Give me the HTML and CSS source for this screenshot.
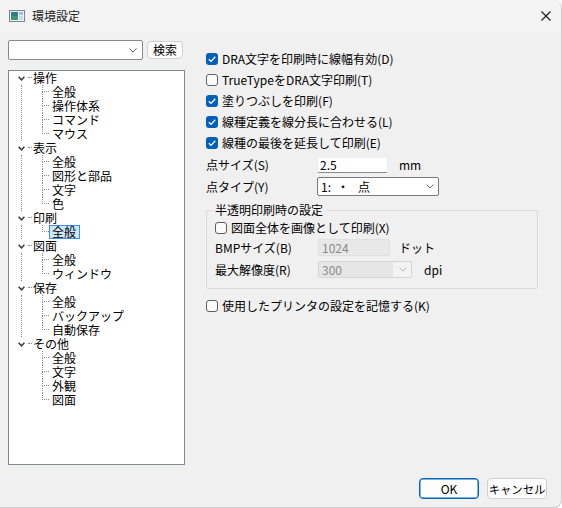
FILE: index.html
```html
<!DOCTYPE html>
<html lang="ja">
<head>
<meta charset="utf-8">
<title>環境設定</title>
<link rel="stylesheet" href="styles.css">
</head>
<body>
<div class="window">
  <header class="titlebar">
    <svg class="app-icon" width="16" height="12" viewBox="0 0 16 12">
      <rect x="0.5" y="0.5" width="15" height="11" fill="#eef1f4" stroke="#7d8590"/>
      <rect x="2" y="2" width="7" height="8" fill="#2f7f86"/>
      <rect x="2" y="6" width="7" height="4" fill="#3e9a6e"/>
      <rect x="10" y="2" width="4" height="3" fill="#9cc3e6"/>
      <rect x="10" y="6" width="4" height="4" fill="#c9dcee"/>
    </svg>
    <span class="title">環境設定</span>
    <svg class="close" width="10" height="10" viewBox="0 0 10 10">
      <path d="M0.5 0.5 L9.5 9.5 M9.5 0.5 L0.5 9.5" stroke="#1b1b1b" stroke-width="1.1" fill="none"/>
    </svg>
  </header>

  <div class="main">
    <div class="left">
      <div class="search">
        <div class="combo">
          <svg class="chev" width="8" height="5" viewBox="0 0 8 5"><path d="M0.5 0.5 L4 4 L7.5 0.5" stroke="#5a5a5a" fill="none"/></svg>
        </div>
        <button class="btn search-btn">検索</button>
      </div>
      <div class="tree">
        <ul class="tree-root">
          <li class="node">
            <div class="prow"><svg class="exp" width="7" height="5" viewBox="0 0 7 5"><path d="M0.6 0.8 L3.5 3.8 L6.4 0.8" stroke="#3c3c3c" stroke-width="1.5" fill="none"/></svg><span class="hl"></span><span class="lbl">操作</span></div>
            <ul class="kids">
              <li class="crow"><span class="conn"><i class="t"></i><i class="b"></i></span><span class="lbl">全般</span></li>
              <li class="crow"><span class="conn"><i class="t"></i><i class="b"></i></span><span class="lbl">操作体系</span></li>
              <li class="crow"><span class="conn"><i class="t"></i><i class="b"></i></span><span class="lbl">コマンド</span></li>
              <li class="crow last"><span class="conn"><i class="t"></i><i class="b"></i></span><span class="lbl">マウス</span></li>
            </ul>
          </li>
          <li class="node">
            <div class="prow"><svg class="exp" width="7" height="5" viewBox="0 0 7 5"><path d="M0.6 0.8 L3.5 3.8 L6.4 0.8" stroke="#3c3c3c" stroke-width="1.5" fill="none"/></svg><span class="hl"></span><span class="lbl">表示</span></div>
            <ul class="kids">
              <li class="crow"><span class="conn"><i class="t"></i><i class="b"></i></span><span class="lbl">全般</span></li>
              <li class="crow"><span class="conn"><i class="t"></i><i class="b"></i></span><span class="lbl">図形と部品</span></li>
              <li class="crow"><span class="conn"><i class="t"></i><i class="b"></i></span><span class="lbl">文字</span></li>
              <li class="crow last"><span class="conn"><i class="t"></i><i class="b"></i></span><span class="lbl">色</span></li>
            </ul>
          </li>
          <li class="node">
            <div class="prow"><svg class="exp" width="7" height="5" viewBox="0 0 7 5"><path d="M0.6 0.8 L3.5 3.8 L6.4 0.8" stroke="#3c3c3c" stroke-width="1.5" fill="none"/></svg><span class="hl"></span><span class="lbl">印刷</span></div>
            <ul class="kids">
              <li class="crow last"><span class="conn"><i class="t"></i><i class="b"></i></span><span class="lbl selected">全般</span></li>
            </ul>
          </li>
          <li class="node">
            <div class="prow"><svg class="exp" width="7" height="5" viewBox="0 0 7 5"><path d="M0.6 0.8 L3.5 3.8 L6.4 0.8" stroke="#3c3c3c" stroke-width="1.5" fill="none"/></svg><span class="hl"></span><span class="lbl">図面</span></div>
            <ul class="kids">
              <li class="crow"><span class="conn"><i class="t"></i><i class="b"></i></span><span class="lbl">全般</span></li>
              <li class="crow last"><span class="conn"><i class="t"></i><i class="b"></i></span><span class="lbl">ウィンドウ</span></li>
            </ul>
          </li>
          <li class="node">
            <div class="prow"><svg class="exp" width="7" height="5" viewBox="0 0 7 5"><path d="M0.6 0.8 L3.5 3.8 L6.4 0.8" stroke="#3c3c3c" stroke-width="1.5" fill="none"/></svg><span class="hl"></span><span class="lbl">保存</span></div>
            <ul class="kids">
              <li class="crow"><span class="conn"><i class="t"></i><i class="b"></i></span><span class="lbl">全般</span></li>
              <li class="crow"><span class="conn"><i class="t"></i><i class="b"></i></span><span class="lbl">バックアップ</span></li>
              <li class="crow last"><span class="conn"><i class="t"></i><i class="b"></i></span><span class="lbl">自動保存</span></li>
            </ul>
          </li>
          <li class="node lastnode">
            <div class="prow"><svg class="exp" width="7" height="5" viewBox="0 0 7 5"><path d="M0.6 0.8 L3.5 3.8 L6.4 0.8" stroke="#3c3c3c" stroke-width="1.5" fill="none"/></svg><span class="hl"></span><span class="lbl">その他</span></div>
            <ul class="kids">
              <li class="crow"><span class="conn"><i class="t"></i><i class="b"></i></span><span class="lbl">全般</span></li>
              <li class="crow"><span class="conn"><i class="t"></i><i class="b"></i></span><span class="lbl">文字</span></li>
              <li class="crow"><span class="conn"><i class="t"></i><i class="b"></i></span><span class="lbl">外観</span></li>
              <li class="crow last"><span class="conn"><i class="t"></i><i class="b"></i></span><span class="lbl">図面</span></li>
            </ul>
          </li>
        </ul>
      </div>
    </div>

    <div class="right">
      <div class="check-row"><span class="cb on"><svg width="12" height="12" viewBox="0 0 12 12"><path d="M2.8 6.2 L5 8.4 L9.3 3.8" stroke="#fff" stroke-width="1.3" fill="none"/></svg></span><span>DRA文字を印刷時に線幅有効(D)</span></div>
      <div class="check-row"><span class="cb"></span><span>TrueTypeをDRA文字印刷(T)</span></div>
      <div class="check-row"><span class="cb on"><svg width="12" height="12" viewBox="0 0 12 12"><path d="M2.8 6.2 L5 8.4 L9.3 3.8" stroke="#fff" stroke-width="1.3" fill="none"/></svg></span><span>塗りつぶしを印刷(F)</span></div>
      <div class="check-row"><span class="cb on"><svg width="12" height="12" viewBox="0 0 12 12"><path d="M2.8 6.2 L5 8.4 L9.3 3.8" stroke="#fff" stroke-width="1.3" fill="none"/></svg></span><span>線種定義を線分長に合わせる(L)</span></div>
      <div class="check-row"><span class="cb on"><svg width="12" height="12" viewBox="0 0 12 12"><path d="M2.8 6.2 L5 8.4 L9.3 3.8" stroke="#fff" stroke-width="1.3" fill="none"/></svg></span><span>線種の最後を延長して印刷(E)</span></div>

      <div class="field-row size-row">
        <span class="field-label">点サイズ(S)</span>
        <div class="edit">2.5</div>
        <span class="unit mm">mm</span>
      </div>
      <div class="field-row type-row">
        <span class="field-label">点タイプ(Y)</span>
        <div class="select">
          <span>1:</span><span class="pt-dot">・</span><span class="pt-name">点</span>
          <svg class="sel-chev" width="8" height="5" viewBox="0 0 8 5"><path d="M0.5 0.5 L4 4 L7.5 0.5" stroke="#6b6b6b" fill="none"/></svg>
        </div>
      </div>

      <fieldset class="group">
        <legend>半透明印刷時の設定</legend>
        <div class="check-row inner-check"><span class="cb"></span><span>図面全体を画像として印刷(X)</span></div>
        <div class="field-row inner bmp-row">
          <span class="field-label in">BMPサイズ(B)</span>
          <div class="edit disabled">1024</div>
          <span class="unit dots">ドット</span>
        </div>
        <div class="field-row inner dpi-row">
          <span class="field-label in">最大解像度(R)</span>
          <div class="select disabled">
            <span class="dis-text">300</span>
            <svg class="sel-chev" width="8" height="5" viewBox="0 0 8 5"><path d="M0.5 0.5 L4 4 L7.5 0.5" stroke="#b4b4b4" fill="none"/></svg>
          </div>
          <span class="unit dpi">dpi</span>
        </div>
      </fieldset>

      <div class="check-row last-check"><span class="cb"></span><span>使用したプリンタの設定を記憶する(K)</span></div>
    </div>
  </div>

  <footer class="footer">
    <button class="btn primary">OK</button>
    <button class="btn cancel">キャンセル</button>
  </footer>
</div>
</body>
</html>
```

FILE: styles.css
```css
html, body {
  margin: 0;
  padding: 0;
  background: #ffffff;
}

body {
  font-family: "Noto Sans CJK JP", "Noto Sans", sans-serif;
  font-size: 12px;
  color: #000;
}

.window {
  width: 562px;
  height: 508px;
  box-sizing: border-box;
  background: #f0f0f0;
  border-right: 1px solid #cdcdcd;
  border-bottom: 1px solid #cdcdcd;
  border-top-right-radius: 8px;
  border-bottom-right-radius: 8px;
  display: flex;
  flex-direction: column;
  overflow: hidden;
}

/* title bar */
.titlebar {
  flex: none;
  height: 32px;
  background: #f3f3f3;
  display: flex;
  align-items: center;
  padding-left: 9px;
}

.app-icon {
  display: block;
}

.title {
  margin-left: 7px;
  font-size: 12px;
  line-height: 14px;
  color: #1a1a1a;
}

.close {
  display: block;
  margin-left: auto;
  margin-right: 10px;
}

/* main area */
.main {
  flex: none;
  display: grid;
  grid-template-columns: 177px 332px;
  column-gap: 21px;
  padding: 8px 0 0 8px;
}

.left {
  display: flex;
  flex-direction: column;
}

.search {
  display: flex;
  align-items: center;
  gap: 4px;
  height: 20px;
}

.combo {
  width: 135px;
  height: 20px;
  box-sizing: border-box;
  background: #fff;
  border: 1px solid #8a8a8a;
  border-radius: 2px;
  display: flex;
  align-items: center;
  justify-content: flex-end;
  padding-right: 5px;
}

.chev {
  display: block;
}

.btn {
  font-family: "Noto Sans CJK JP", "Noto Sans", sans-serif;
  font-size: 12px;
  line-height: 14px;
  color: #000;
  background: #fdfdfd;
  border: 1px solid #d0d0d0;
  border-radius: 4px;
  padding: 0;
  box-sizing: border-box;
  white-space: nowrap;
}

.search-btn {
  width: 36px;
  height: 18px;
}

/* tree */
.tree {
  margin-top: 10px;
  height: 395px;
  box-sizing: border-box;
  background: #fff;
  border: 1px solid #828790;
}

.tree ul {
  list-style: none;
  margin: 0;
  padding: 0;
}

.prow {
  height: 14px;
  display: flex;
  align-items: center;
  padding-left: 9px;
}

.exp {
  display: block;
  width: 7px;
  height: 5px;
  margin-top: 1px;
}

.hl {
  align-self: flex-start;
  width: 4px;
  height: 7px;
  box-sizing: border-box;
  margin-left: 3px;
  border-bottom: 1px dotted #8c8c8c;
}

.lbl {
  line-height: 12px;
  border: 1px solid transparent;
  padding: 0 3px 0 2px;
  white-space: nowrap;
}

.prow .lbl {
  padding-left: 0;
}

.lbl.selected {
  background: #cce8ff;
  border-color: #3b8fdc;
}

.tree .kids {
  margin-left: 12px;
  border-left: 1px dotted #8c8c8c;
}

.tree .lastnode .kids {
  border-left-color: transparent;
}

.crow {
  height: 14px;
  display: flex;
  align-items: center;
  padding-left: 20px;
}

.conn {
  align-self: stretch;
  width: 7px;
  display: flex;
  flex-direction: column;
}

.conn i {
  display: block;
  height: 7px;
  box-sizing: border-box;
  border-left: 1px dotted #8c8c8c;
}

.conn .t {
  border-bottom: 1px dotted #8c8c8c;
}

.crow.last .conn .b {
  border-left-color: transparent;
}

/* right panel */
.right {
  display: flex;
  flex-direction: column;
  padding-top: 8px;
}

.check-row {
  height: 21px;
  display: flex;
  align-items: center;
  line-height: 14px;
  white-space: nowrap;
}

.cb {
  flex: none;
  width: 12px;
  height: 12px;
  box-sizing: border-box;
  border: 1px solid #5f5f5f;
  border-radius: 3px;
  background: #fafafa;
  margin-right: 4px;
  display: flex;
  align-items: center;
  justify-content: center;
}

.cb.on {
  border: none;
  background: #005fb8;
}

.cb svg {
  display: block;
}

.field-row {
  display: flex;
  align-items: center;
  line-height: 14px;
  white-space: nowrap;
}

.size-row {
  margin-top: 4px;
  height: 16px;
}

.type-row {
  margin-top: 4px;
  height: 19px;
}

.field-label {
  width: 111px;
  flex: none;
}

.field-label.in {
  width: 103px;
}

.edit {
  width: 71px;
  height: 16px;
  box-sizing: border-box;
  background: #fff;
  border: 1px solid #ececec;
  border-bottom-color: #8a8a8a;
  border-radius: 2px;
  padding-left: 2px;
  display: flex;
  align-items: center;
}

.unit.mm {
  margin-left: 11px;
}

.select {
  width: 122px;
  height: 19px;
  box-sizing: border-box;
  background: #fff;
  border: 1px solid #7a7a7a;
  border-radius: 2px;
  display: flex;
  align-items: center;
  padding-left: 3px;
  padding-right: 4px;
}

.pt-dot {
  margin-left: 6px;
}

.pt-name {
  margin-left: 9px;
}

.sel-chev {
  display: block;
  margin-left: auto;
}

/* group box */
.group {
  margin: 6px 0 0 0;
  padding: 0 0 10px 8px;
  border: 1px solid #dcdcdc;
  border-radius: 2px;
  min-width: 0;
  box-sizing: border-box;
  width: 332px;
}

.group legend {
  padding: 0 2px;
  margin-left: -2px;
  line-height: 16px;
  color: #000;
}

.inner-check {
  height: 20px;
}

.bmp-row {
  margin-top: 1px;
  height: 17px;
}

.dpi-row {
  margin-top: 5px;
  height: 17px;
}

.edit.disabled {
  width: 72px;
  height: 17px;
  background: #e8e8e8;
  border: 1px solid #e0e0e0;
  color: #8a8a8a;
  padding-left: 3px;
}

.unit.dots {
  margin-left: 9px;
}

.select.disabled {
  width: 94px;
  height: 17px;
  background: #f3f3f3;
  border: 1px solid #d4d4d4;
  padding-left: 0;
  padding-right: 4px;
}

.dis-text {
  align-self: stretch;
  width: 74px;
  background: #e6e6e6;
  color: #8a8a8a;
  padding-left: 3px;
  display: flex;
  align-items: center;
  box-sizing: border-box;
}

.unit.dpi {
  margin-left: 12px;
}

.last-check {
  margin-top: 6px;
}

/* footer */
.footer {
  flex: none;
  display: flex;
  justify-content: flex-end;
  gap: 8px;
  padding: 13px 14px 0 0;
}

.footer .btn {
  width: 60px;
  height: 21px;
}

.footer .btn.cancel {
  font-size: 11.4px;
  letter-spacing: -0.1px;
}

.footer .btn.primary {
  border-color: #0067c0;
  box-shadow: inset 0 0 0 0.5px #0067c0;
}
```
